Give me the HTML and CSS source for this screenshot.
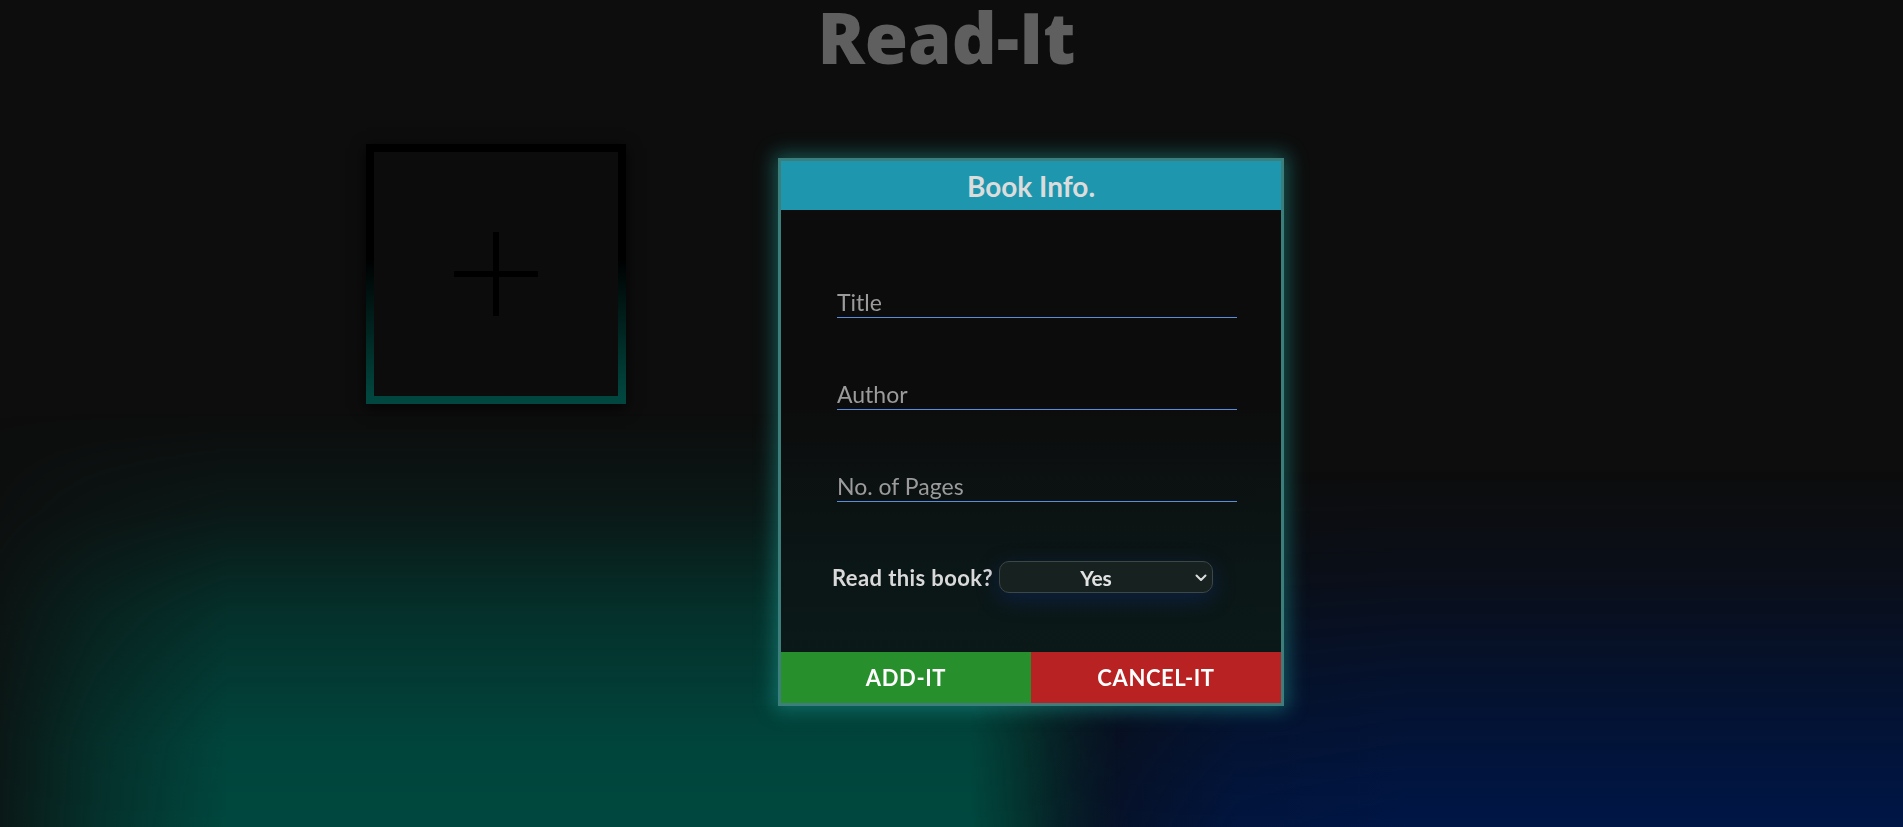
FILE: index.html
```html
<!DOCTYPE html>
<html lang="en">
<head>
<meta charset="utf-8">
<title>Read-It</title>
<link rel="stylesheet" href="styles.css">
</head>
<body>
<h1 class="brand">Read-It</h1>
<main class="shelf">
  <button class="add-book" type="button" aria-label="Add book">
    <svg width="84" height="84" viewBox="0 0 84 84" aria-hidden="true">
      <rect x="0" y="39" width="84" height="6" fill="#000"/>
      <rect x="39" y="0" width="6" height="84" fill="#000"/>
    </svg>
  </button>
</main>
<form class="modal">
  <div class="modal-head">Book Info.</div>
  <div class="modal-body">
    <input class="field" type="text" placeholder="Title">
    <input class="field" type="text" placeholder="Author">
    <input class="field" type="number" placeholder="No. of Pages">
    <div class="read-row">
      <label class="read-label" for="read">Read this book?</label>
      <div class="select-wrap">
        <select id="read" class="read-select">
          <option>Yes</option>
          <option>No</option>
        </select>
        <svg class="chevron" width="12" height="8" viewBox="0 0 12 8" aria-hidden="true">
          <path d="M1.5 1.5 L6 6 L10.5 1.5" fill="none" stroke="#dcdcdc" stroke-width="2" stroke-linecap="round" stroke-linejoin="round"/>
        </svg>
      </div>
    </div>
  </div>
  <div class="modal-foot">
    <button type="button" class="btn btn-add">ADD-IT</button>
    <button type="button" class="btn btn-cancel">CANCEL-IT</button>
  </div>
</form>
</body>
</html>
```
FILE: styles.css
```css
* { box-sizing: border-box; }

html, body {
  margin: 0;
  height: 100%;
}

body {
  position: relative;
  overflow: hidden;
  font-family: Lato, "Open Sans", sans-serif;
  background-color: #0d0d0d;
}

/* soft glowing backdrop: teal on the left, blue on the right */
body::before,
body::after {
  content: "";
  position: fixed;
  inset: 0;
  z-index: -1;
  pointer-events: none;
}

body::before {
  background: linear-gradient(to right,
    rgba(0, 72, 63, 0.2) 0%,
    rgba(0, 72, 63, 0.6) 5%,
    rgba(0, 72, 63, 1) 12%,
    rgba(0, 72, 63, 1) 51%,
    rgba(0, 66, 62, 0.55) 55%,
    rgba(0, 60, 60, 0) 59%);
  -webkit-mask-image: linear-gradient(to bottom,
    transparent 50%,
    rgba(0, 0, 0, 0.2) 62%,
    rgba(0, 0, 0, 0.6) 74%,
    rgba(0, 0, 0, 0.95) 90%,
    black 100%);
  mask-image: linear-gradient(to bottom,
    transparent 50%,
    rgba(0, 0, 0, 0.2) 62%,
    rgba(0, 0, 0, 0.6) 74%,
    rgba(0, 0, 0, 0.95) 90%,
    black 100%);
}

body::after {
  background: linear-gradient(to right,
    rgba(0, 22, 68, 0) 54%,
    rgba(0, 22, 68, 0.55) 59%,
    rgba(0, 22, 68, 0.9) 65%,
    rgba(0, 22, 70, 1) 74%,
    rgba(0, 22, 70, 1) 100%);
  -webkit-mask-image: linear-gradient(to bottom,
    transparent 57%,
    rgba(0, 0, 0, 0.2) 69%,
    rgba(0, 0, 0, 0.55) 81%,
    rgba(0, 0, 0, 0.9) 95%,
    black 100%);
  mask-image: linear-gradient(to bottom,
    transparent 57%,
    rgba(0, 0, 0, 0.2) 69%,
    rgba(0, 0, 0, 0.55) 81%,
    rgba(0, 0, 0, 0.9) 95%,
    black 100%);
}

.brand {
  margin: 0;
  height: 74px;
  line-height: 74px;
  padding-right: 10px;
  text-align: center;
  font-family: "Open Sans", Lato, sans-serif;
  font-weight: 800;
  font-size: 70px;
  color: #5f5f5f;
}

.shelf {
  display: flex;
  gap: 40px;
  padding: 70px 0 0 366px;
}

.add-book {
  width: 260px;
  height: 260px;
  padding: 0;
  display: flex;
  align-items: center;
  justify-content: center;
  background: #0c0c0c;
  border: 8px solid #000;
  border-image: linear-gradient(to bottom, #000 0%, #000 44%, #01473f 100%) 1;
  box-shadow: 0 4px 14px rgba(0, 0, 0, 0.75);
  cursor: pointer;
}

.modal {
  position: absolute;
  left: 778px;
  top: 158px;
  width: 506px;
  height: 548px;
  margin: 0;
  display: flex;
  flex-direction: column;
  border: 3px solid #3c7e7b;
  background: linear-gradient(to bottom, #0c0c0c 0%, #0c0c0c 45%, #0b1616 75%, #0a1b1a 100%);
  box-shadow: 0 0 18px 4px rgba(30, 170, 165, 0.45);
}

.modal-head {
  height: 49px;
  display: flex;
  align-items: center;
  justify-content: center;
  background: #1e97ae;
  color: #dcdcdc;
  font-size: 28px;
  font-weight: 700;
}

.modal-body {
  flex: 1;
  display: flex;
  flex-direction: column;
  gap: 60px;
  padding: 76px 44px 0 56px;
}

.field {
  display: block;
  width: 400px;
  height: 32px;
  padding: 0;
  border: none;
  border-bottom: 1px solid #5b8ddf;
  background: transparent;
  font-family: Lato, "Open Sans", sans-serif;
  font-size: 23px;
  color: #dcdcdc;
  outline: none;
  -moz-appearance: textfield;
}

.field::placeholder {
  color: #9b9b9b;
}

.field::-webkit-outer-spin-button,
.field::-webkit-inner-spin-button {
  -webkit-appearance: none;
  margin: 0;
}

.read-row {
  display: flex;
  align-items: center;
  gap: 6px;
  margin-top: -1px;
  margin-left: -5px;
}

.read-label {
  font-size: 22px;
  font-weight: 700;
  letter-spacing: 0.4px;
  color: #d9d9d9;
}

.select-wrap {
  position: relative;
  width: 214px;
  height: 32px;
  border-radius: 10px;
  box-shadow: 0 6px 22px rgba(18, 44, 120, 0.45);
}

.read-select {
  -webkit-appearance: none;
  appearance: none;
  width: 100%;
  height: 100%;
  padding: 0 20px 0 0;
  border: 1px solid #3c4846;
  border-radius: 10px;
  background: #162120;
  color: #e2e2e2;
  font-family: Lato, "Open Sans", sans-serif;
  font-size: 21px;
  font-weight: 700;
  text-align: center;
  text-align-last: center;
  outline: none;
}

.chevron {
  position: absolute;
  right: 6px;
  top: 13px;
  pointer-events: none;
}

.modal-foot {
  height: 51px;
  display: flex;
}

.btn {
  flex: 1;
  border: none;
  margin: 0;
  padding: 0;
  color: #ffffff;
  font-family: Lato, "Open Sans", sans-serif;
  font-size: 22px;
  font-weight: 700;
  letter-spacing: 0.6px;
  cursor: pointer;
}

.btn-add { background: #288f2d; }
.btn-cancel { background: #b82222; }
```
